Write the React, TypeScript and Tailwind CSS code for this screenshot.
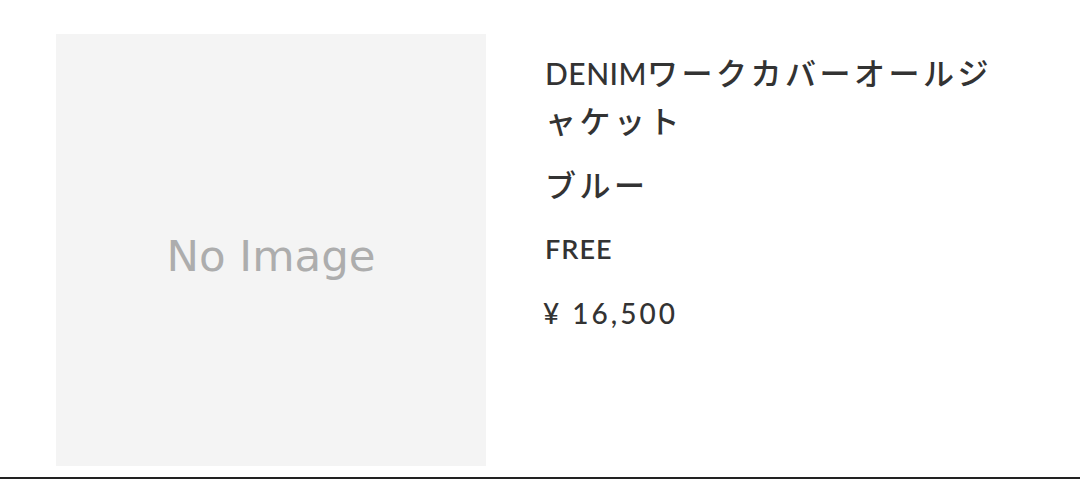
import React from "react";

const jp = { fontFamily: '"Lato", "Noto Sans CJK JP", sans-serif' };

export default function App() {
  return (
    <div className="w-[1080px] h-[479px] bg-white flex flex-col overflow-hidden">
      <div className="flex flex-1 pt-[34px] pl-[56px]">
        <div className="w-[430px] h-[432px] bg-[#f4f4f4] flex items-center justify-center shrink-0">
          <span
            className="text-[43.5px] text-[#adadad] pt-[14px]"
            style={{ fontFamily: '"DejaVu Sans", Verdana, sans-serif' }}
          >
            No Image
          </span>
        </div>
        <div
          className="ml-[59px] pt-[15px] w-[470px] flex flex-col gap-4 text-[#333] font-medium"
          style={jp}
        >
          <h1 className="text-[31px] leading-[48px] tracking-[3.5px] font-medium">
            <span className="text-[30px] tracking-[0.5px]">DENIM</span>ワークカバーオールジャケット
          </h1>
          <p className="text-[31px] leading-[48px] tracking-[3.5px]">ブルー</p>
          <p className="text-[27px] leading-[48px] tracking-[1px] font-semibold">FREE</p>
          <p className="text-[28px] leading-[48px] tracking-[3px] -ml-[2px]">¥ 16,500</p>
        </div>
      </div>
      <div className="h-[2px] bg-[#222]" />
    </div>
  );
}
